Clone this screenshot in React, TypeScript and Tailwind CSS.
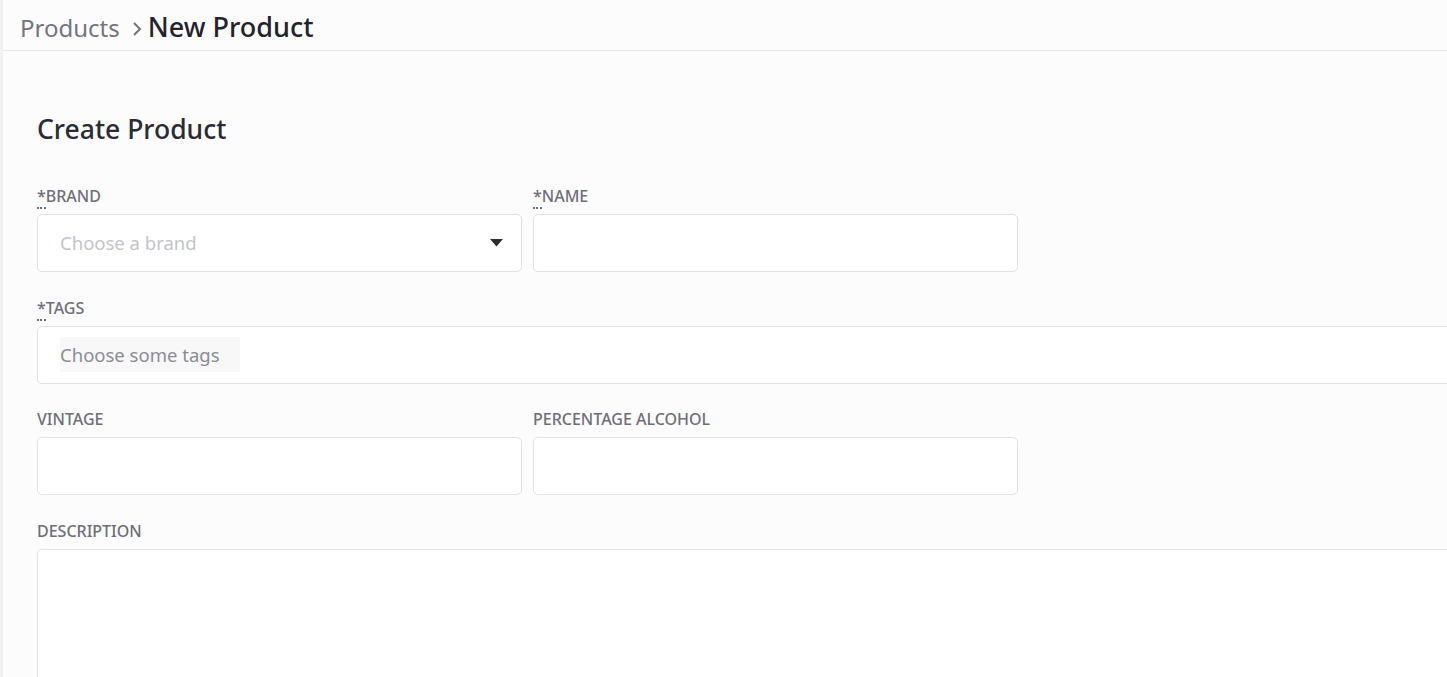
const Label = ({ text, required }: { text: string; required?: boolean }) => (
  <label className="block h-5 mb-2 text-[16px] leading-5 font-medium uppercase text-[#6e6e78]">
    {required && (
      <abbr title="required" className="no-underline border-b-2 border-dotted border-[#6e6e78] leading-[10px]">
        *
      </abbr>
    )}
    {text}
  </label>
);

const boxClass = "h-[58px] w-full rounded-[5px] border border-[#e2e2e4] bg-white";

const App = () => (
  <div className="flex min-h-[677px] w-full overflow-hidden bg-[#f0f0f1] font-['Noto_Sans',sans-serif]">
    <div className="w-[3px] shrink-0" />
    <main className="flex-1 bg-[#fcfcfc]">
      <header className="flex h-[51px] items-center gap-1 border-b border-[#e6e6e8] px-[17px] pt-[5px]">
        <span className="text-[24px] text-[#75757f]">Products</span>
        <svg width="14" height="18" viewBox="0 0 14 18" className="ml-[6px] mt-[2px]">
          <polyline points="4,3 10,9 4,15" fill="none" stroke="#75757f" strokeWidth="2" />
        </svg>
        <span className="text-[27px] font-medium text-[#23232d]">New Product</span>
      </header>

      <section className="px-[34px] pt-[60px]">
        <h1 className="mb-[39px] text-[26.5px] leading-[36px] font-medium text-[#2b2b33]">Create Product</h1>

        <form className="grid w-[1477px] grid-cols-3 gap-x-[11px] gap-y-[25.5px]">
          <div>
            <Label text="Brand" required />
            <div className={`${boxClass} flex items-center justify-between pl-[22px] pr-[18px]`}>
              <span className="text-[18.5px] text-[#c4c4ca]">Choose a brand</span>
              <svg width="13" height="8" viewBox="0 0 13 8">
                <polygon points="0,0 13,0 6.5,7.5" fill="#2e2e33" />
              </svg>
            </div>
          </div>
          <div>
            <Label text="Name" required />
            <input className={`${boxClass} px-[22px] outline-none`} />
          </div>
          <div />

          <div className="col-span-3">
            <Label text="Tags" required />
            <div className={`${boxClass} flex items-center pl-[22px]`}>
              <span className="bg-[#f8f8f9] pr-5 py-[4px] text-[18.5px] text-[#8c8c96]">Choose some tags</span>
            </div>
          </div>

          <div>
            <Label text="Vintage" />
            <input className={`${boxClass} px-[22px] outline-none`} />
          </div>
          <div>
            <Label text="Percentage Alcohol" />
            <input className={`${boxClass} px-[22px] outline-none`} />
          </div>
          <div />

          <div className="col-span-3">
            <Label text="Description" />
            <textarea className="h-[200px] w-full resize-none rounded-[5px] border border-[#e2e2e4] bg-white outline-none" />
          </div>
        </form>
      </section>
    </main>
  </div>
);

export default App;
